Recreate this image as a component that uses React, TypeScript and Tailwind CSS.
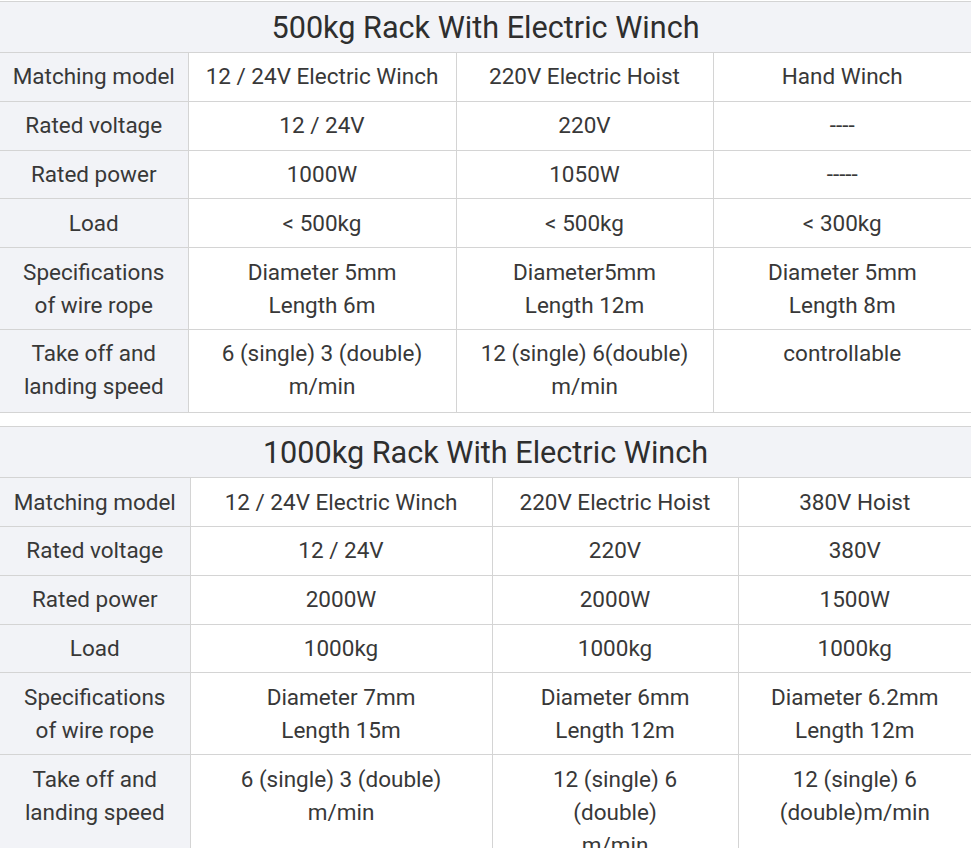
import React from "react";

type Spec = {
  title: string;
  cols: number[];
  rows: { label: string[]; cells: string[][] }[];
};

const tables: Spec[] = [
  {
    title: "500kg Rack With Electric Winch",
    cols: [188, 268, 257, 258],
    rows: [
      { label: ["Matching model"], cells: [["12 / 24V Electric Winch"], ["220V Electric Hoist"], ["Hand Winch"]] },
      { label: ["Rated voltage"], cells: [["12 / 24V"], ["220V"], ["----"]] },
      { label: ["Rated power"], cells: [["1000W"], ["1050W"], ["-----"]] },
      { label: ["Load"], cells: [["< 500kg"], ["< 500kg"], ["< 300kg"]] },
      {
        label: ["Specifications", "of wire rope"],
        cells: [
          ["Diameter 5mm", "Length 6m"],
          ["Diameter5mm", "Length 12m"],
          ["Diameter 5mm", "Length 8m"],
        ],
      },
      {
        label: ["Take off and", "landing speed"],
        cells: [
          ["6 (single) 3 (double)", "m/min"],
          ["12 (single) 6(double)", "m/min"],
          ["controllable"],
        ],
      },
    ],
  },
  {
    title: "1000kg Rack With Electric Winch",
    cols: [190, 302, 246, 233],
    rows: [
      { label: ["Matching model"], cells: [["12 / 24V Electric Winch"], ["220V Electric Hoist"], ["380V Hoist"]] },
      { label: ["Rated voltage"], cells: [["12 / 24V"], ["220V"], ["380V"]] },
      { label: ["Rated power"], cells: [["2000W"], ["2000W"], ["1500W"]] },
      { label: ["Load"], cells: [["1000kg"], ["1000kg"], ["1000kg"]] },
      {
        label: ["Specifications", "of wire rope"],
        cells: [
          ["Diameter 7mm", "Length 15m"],
          ["Diameter 6mm", "Length 12m"],
          ["Diameter 6.2mm", "Length 12m"],
        ],
      },
      {
        label: ["Take off and", "landing speed"],
        cells: [
          ["6 (single) 3 (double)", "m/min"],
          ["12 (single) 6", "(double)", "m/min"],
          ["12 (single) 6", "(double)m/min"],
        ],
      },
    ],
  },
];

function Lines({ lines }: { lines: string[] }) {
  return (
    <>
      {lines.map((l, i) => (
        <div key={i}>{l}</div>
      ))}
    </>
  );
}

function SpecTable({ spec }: { spec: Spec }) {
  return (
    <table className="w-full table-fixed border-collapse text-[22.5px] leading-[33px] text-[#383838]">
      <colgroup>
        {spec.cols.map((w, i) => (
          <col key={i} style={{ width: w }} />
        ))}
      </colgroup>
      <thead>
        <tr>
          <th
            colSpan={4}
            className="h-[51px] border-y border-[#d4d4d4] bg-[#f2f3f7] p-0 pt-[2px] text-center align-middle text-[30.6px] font-normal leading-[36px] text-[#2e2e2e]"
          >
            {spec.title}
          </th>
        </tr>
      </thead>
      <tbody>
        {spec.rows.map((row, i) => (
          <tr key={i} className="last:[&>td]:pb-[9px]">
            <td className="border border-l-0 border-[#d4d4d4] bg-[#f2f3f7] px-1 py-[7.4px] text-center align-top">
              <Lines lines={row.label} />
            </td>
            {row.cells.map((c, j) => (
              <td
                key={j}
                className="border border-[#d4d4d4] bg-white px-1 py-[7.4px] text-center align-top last:border-r-0"
              >
                <Lines lines={c} />
              </td>
            ))}
          </tr>
        ))}
      </tbody>
    </table>
  );
}

export default function App() {
  return (
    <div className="min-h-[848px] w-[971px] bg-white pt-px font-['Roboto',sans-serif]">
      <div className="flex flex-col gap-[13px]">
        {tables.map((t) => (
          <SpecTable key={t.title} spec={t} />
        ))}
      </div>
    </div>
  );
}
